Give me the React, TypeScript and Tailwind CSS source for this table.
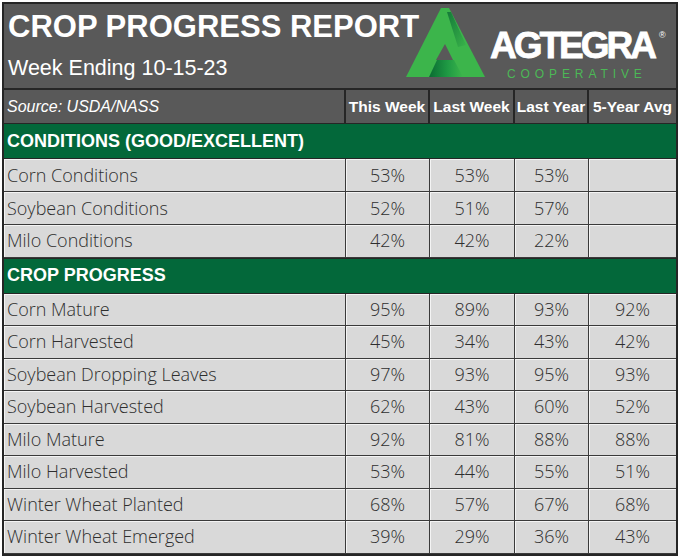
import React from 'react';

type Row = { label: string; values: string[] };

const conditions: Row[] = [
  { label: 'Corn Conditions', values: ['53%', '53%', '53%', ''] },
  { label: 'Soybean Conditions', values: ['52%', '51%', '57%', ''] },
  { label: 'Milo Conditions', values: ['42%', '42%', '22%', ''] },
];

const progress: Row[] = [
  { label: 'Corn Mature', values: ['95%', '89%', '93%', '92%'] },
  { label: 'Corn Harvested', values: ['45%', '34%', '43%', '42%'] },
  { label: 'Soybean Dropping Leaves', values: ['97%', '93%', '95%', '93%'] },
  { label: 'Soybean Harvested', values: ['62%', '43%', '60%', '52%'] },
  { label: 'Milo Mature', values: ['92%', '81%', '88%', '88%'] },
  { label: 'Milo Harvested', values: ['53%', '44%', '55%', '51%'] },
  { label: 'Winter Wheat Planted', values: ['68%', '57%', '67%', '68%'] },
  { label: 'Winter Wheat Emerged', values: ['39%', '29%', '36%', '43%'] },
];

const columns = ['This Week', 'Last Week', 'Last Year', '5-Year Avg'];

const grid = 'grid grid-cols-[342px_84px_85px_74px_87px]';
const arial = "font-['Liberation_Sans',Arial,sans-serif]";
const open = "font-['Open_Sans',sans-serif]";

const Logo = () => (
  <svg width="95" height="78" viewBox="0 0 95 78" className="shrink-0 -mt-[1px]">
    <defs>
      <linearGradient id="bar" x1="0" y1="0" x2="1" y2="0">
        <stop offset="0" stopColor="#0a6b32" />
        <stop offset="0.55" stopColor="#1f9a44" />
        <stop offset="1" stopColor="#3cb54b" />
      </linearGradient>
      <linearGradient id="fold" x1="0" y1="0" x2="1" y2="1">
        <stop offset="0" stopColor="#157a39" />
        <stop offset="1" stopColor="#39b24a" />
      </linearGradient>
    </defs>
    {/* main triangle */}
    <polygon points="8,74 43,5 51,5 87,74" fill="#3cb54b" />
    {/* right leg fold */}
    <polygon points="49,9 53,9 68,42 60,44" fill="url(#fold)" />
    {/* inner notch */}
    <polygon points="38,57 47,41 55,57" fill="#595959" />
    {/* cross bar */}
    <polygon points="31,74 39,57 56,57 65,74" fill="url(#bar)" />
  </svg>
);

const DataRow = ({ row, tall }: { row: Row; tall?: boolean }) => (
  <div className={`${grid} ${tall ? 'h-[33px]' : 'h-[32.5px]'} bg-[#d9d9d9] ${open} font-light text-[18px] text-[#2e2e2e]`}>
    <div className="flex items-center pl-[3px] border-r border-b border-[#3a3a3a] shadow-[inset_1px_1px_0_#f4f4f4] whitespace-nowrap">
      {row.label}
    </div>
    {row.values.map((v, i) => (
      <div
        key={i}
        className="flex items-center justify-center border-r border-b border-[#3a3a3a] shadow-[inset_1px_1px_0_#f4f4f4] last:border-r-0"
      >
        {v}
      </div>
    ))}
  </div>
);

const SectionRow = ({ title }: { title: string }) => (
  <div className={`h-[35px] flex items-center pl-[3px] bg-[#03683a] border-b border-[#262626] text-white font-bold text-[18px] ${arial}`}>
    {title}
  </div>
);

export default function App() {
  return (
    <div className="w-[680px] h-[558px] bg-white pt-[2px] pl-[2px]">
      <div className="w-[676px] border-2 border-[#262626] bg-[#595959]">
        {/* Header */}
        <div className={`h-[86px] flex border-b-2 border-[#262626] ${arial} text-white`}>
          <div className="w-[394px] shrink-0 pl-[4px] pt-[7px] whitespace-nowrap">
            <div className="text-[31px] font-bold leading-none">CROP PROGRESS REPORT</div>
            <div className="text-[21.5px] leading-none mt-[16px]">Week Ending 10-15-23</div>
          </div>
          <Logo />
          <div className="flex flex-col pt-[23px]">
            <div className="flex items-start -ml-[3px]">
              <span className="text-[37px] font-bold leading-none tracking-[-3px] [-webkit-text-stroke:0.8px_white]">
                AGTEGRA
              </span>
              <span className="text-[9px] leading-none ml-[5px] mt-[4px]">®</span>
            </div>
            <div className="text-[12px] leading-none mt-[4px] ml-[14px] tracking-[4.9px] text-[#4cb856]">
              COOPERATIVE
            </div>
          </div>
        </div>

        {/* Column header */}
        <div className={`${grid} h-[33px] ${arial} text-white`}>
          <div className="flex items-center pl-[3px] italic text-[16px] border-r-2 border-[#262626]">
            Source: USDA/NASS
          </div>
          {columns.map((c) => (
            <div
              key={c}
              className="flex items-center justify-center font-bold text-[15.5px] whitespace-nowrap border-r-2 border-[#262626] last:border-r-0"
            >
              {c}
            </div>
          ))}
        </div>

        <div className="border-t border-[#262626]">
          <SectionRow title="CONDITIONS (GOOD/EXCELLENT)" />
          {conditions.map((r, i) => (
            <DataRow key={r.label} row={r} tall={i < 2} />
          ))}
          <div className="border-t border-[#262626]" />
          <SectionRow title="CROP PROGRESS" />
          {progress.map((r) => (
            <DataRow key={r.label} row={r} />
          ))}
        </div>
      </div>
    </div>
  );
}
